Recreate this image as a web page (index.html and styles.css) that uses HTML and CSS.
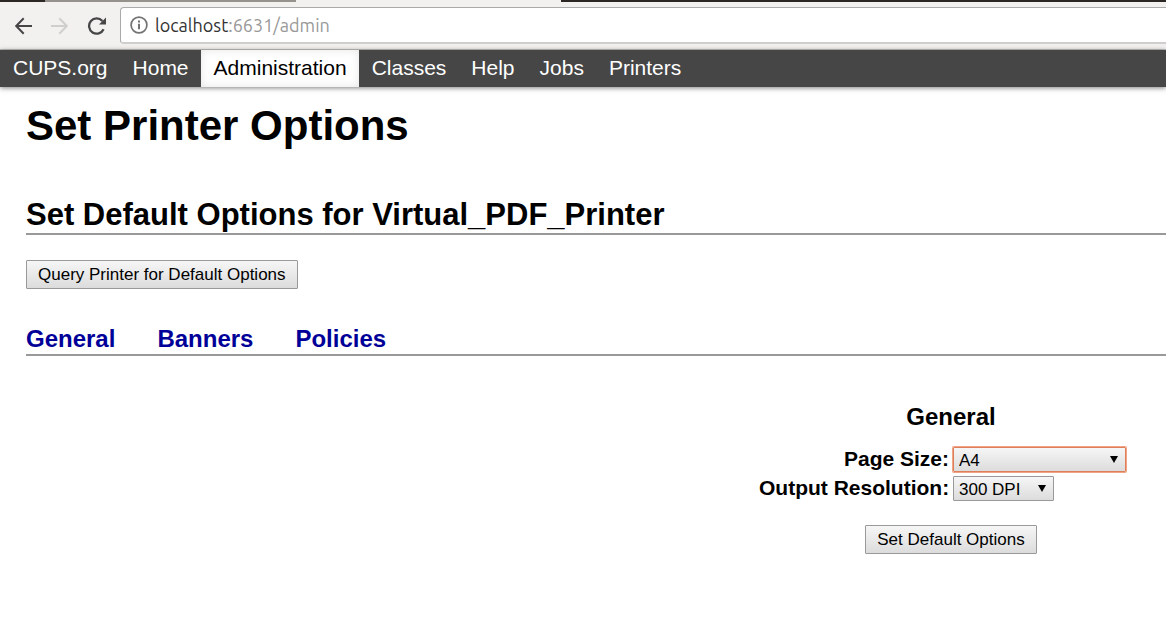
FILE: index.html
```html
<!DOCTYPE html>
<html lang="en">
<head>
<meta charset="utf-8">
<title>Set Printer Options - CUPS</title>
<link rel="stylesheet" href="styles.css">
</head>
<body>
<header class="browser">
  <div class="tabs"><span class="tab-left"></span><span class="tab-active"></span><span class="tab-gap"></span><span class="tab-rest"></span></div>
  <div class="toolbar">
    <button class="tool" type="button" aria-label="Back">
      <svg width="19" height="18" viewBox="0 0 19 18" fill="none" stroke="#464646" stroke-width="2"><path d="M18 9H2.5M9.7 1.3L2.2 9L9.7 16.7"/></svg>
    </button>
    <button class="tool" type="button" aria-label="Forward" disabled>
      <svg width="19" height="18" viewBox="0 0 19 18" fill="none" stroke="#cfcfcd" stroke-width="2"><path d="M1 9H16.5M9.3 1.3L16.8 9L9.3 16.7"/></svg>
    </button>
    <button class="tool" type="button" aria-label="Reload">
      <svg width="19" height="18" viewBox="0 0 19 18" fill="none" stroke="#464646" stroke-width="2.3"><path d="M16.6 12.2A7.6 7.6 0 1 1 15.4 4"/><path d="M19 0.5V7.5H12Z" fill="#464646" stroke="none"/></svg>
    </button>
    <div class="address">
      <svg width="18" height="18" viewBox="0 0 18 18" fill="none" stroke="#737373" stroke-width="1.7"><circle cx="9" cy="9" r="7.9"/><path d="M9 7.8V13.2M9 4.6V6.4" stroke-width="2"/></svg>
      <span class="url">localhost<span class="url-path">:6631/admin</span></span>
    </div>
  </div>
</header>
<nav class="nav">
  <a href="#">CUPS.org</a>
  <a href="#">Home</a>
  <a href="#" class="active">Administration</a>
  <a href="#">Classes</a>
  <a href="#">Help</a>
  <a href="#">Jobs</a>
  <a href="#">Printers</a>
</nav>
<main class="content">
  <h1>Set Printer Options</h1>
  <h2>Set Default Options for Virtual_PDF_Printer</h2>
  <button class="button" type="button">Query Printer for Default Options</button>
  <h3 class="sections">
    <a href="#general">General</a>
    <a href="#banners">Banners</a>
    <a href="#policies">Policies</a>
  </h3>
  <form class="options" id="general">
    <h3>General</h3>
    <div class="fields">
      <label for="size">Page Size:</label>
      <span class="select focused"><select id="size"><option>A4</option></select></span>
      <label for="resolution">Output Resolution:</label>
      <span class="select short"><select id="resolution"><option>300 DPI</option></select></span>
    </div>
    <button class="button" type="button">Set Default Options</button>
  </form>
</main>
</body>
</html>
```
FILE: styles.css
```css
* {
  box-sizing: border-box;
}

body {
  margin: 0;
  background: #fff;
  color: #000;
  font-family: "Liberation Sans", Arial, sans-serif;
  font-size: 21px;
  line-height: 24px;
  overflow-x: hidden;
}

.browser {
  background: #f2f1f0;
  border-bottom: 1px solid #c4c3c2;
}

.tabs {
  display: flex;
  height: 2px;
}

.tab-left {
  width: 45px;
  background: #2b2725;
}

.tab-active {
  width: 251px;
  background: #95928e;
}

.tab-gap {
  width: 265px;
}

.tab-rest {
  flex: 1;
  background: #2b2725;
}

.toolbar {
  display: flex;
  align-items: center;
  padding: 5px 0 5px 14px;
}

.tool {
  display: flex;
  width: 19px;
  margin-right: 17px;
  padding: 0;
  border: 0;
  background: none;
}

.tool:nth-child(3) {
  margin-left: 1px;
}

.address {
  display: flex;
  flex: 1;
  align-items: center;
  gap: 7px;
  height: 37px;
  margin-left: -3px;
  padding-left: 9px;
  background: #fff;
  border: 1px solid #aaa;
  border-bottom: 2px solid #cfcecc;
  border-right: 0;
  border-radius: 4px 0 0 4px;
}

.url {
  color: #333;
  font-family: Ubuntu, "Noto Sans", sans-serif;
  font-size: 18px;
}

.url-path {
  color: #999;
}

.nav {
  display: flex;
  background: #464646;
  box-shadow: 0 1px 5px rgba(0, 0, 0, 0.5);
}

.nav a {
  padding: 6px 12px 7px 13px;
  color: #fff;
  text-decoration: none;
}

.nav .active {
  background: #fff;
  color: #000;
  box-shadow: inset 0 0 10px rgba(0, 0, 0, 0.1);
}

.content {
  padding: 15px 0 24px 26px;
}

h1,
h2,
h3 {
  margin: 0;
}

h1 {
  font-size: 42px;
  line-height: 48px;
}

h2 {
  margin: 46px 0 25px;
  border-bottom: 2px solid #999;
  font-size: 31px;
  line-height: 37px;
}

h3 {
  font-size: 24px;
  line-height: 30px;
}

.sections {
  display: flex;
  gap: 42px;
  margin-top: 35px;
  border-bottom: 2px solid #999;
}

.sections a {
  color: #009;
  text-decoration: none;
}

.button {
  display: block;
  height: 29px;
  padding: 0 11px;
  border: 1px solid #999;
  border-radius: 1px;
  background: linear-gradient(#f6f6f6, #dcdcdc);
  color: #000;
  font-family: inherit;
  font-size: 17px;
}

.options {
  display: flex;
  flex-direction: column;
  align-items: center;
  width: 384px;
  margin: 46px 23px 0 auto;
}

.fields {
  display: grid;
  grid-template-columns: 190px 173px;
  column-gap: 4px;
  row-gap: 4px;
  align-self: flex-start;
  margin: 15px 0 24px;
}

.fields label {
  font-weight: bold;
  line-height: 23px;
  text-align: right;
  white-space: nowrap;
}

.select {
  position: relative;
  height: 25px;
}

.select::after {
  content: "";
  position: absolute;
  top: 9px;
  right: 8px;
  border: 4px solid transparent;
  border-top: 7px solid #000;
  border-bottom: 0;
  pointer-events: none;
}

.select select {
  appearance: none;
  display: block;
  width: 100%;
  height: 25px;
  padding: 1px 5px 0;
  border: 1px solid #999;
  border-radius: 1px;
  background: linear-gradient(#f6f6f6, #dcdcdc);
  color: #000;
  font-family: inherit;
  font-size: 17px;
}

.select.short {
  width: 101px;
}

.focused select {
  border-color: #df7f5a;
  box-shadow: 0 0 0 1px #f0a485;
}
```
